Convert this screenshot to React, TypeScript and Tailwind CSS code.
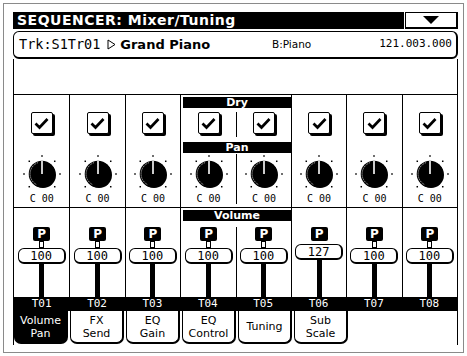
import React from "react";

const MONO = "[font-family:'DejaVu_Sans_Mono',monospace]";
const SANS = "[font-family:'DejaVu_Sans',sans-serif]";

function Check() {
  return (
    <div className="w-[22px] h-[22px] border-[1.5px] border-black rounded-[2px] bg-white shadow-[2px_2px_0_0_#000] flex items-center justify-center">
      <svg width="15" height="13" viewBox="0 0 15 13">
        <path d="M1.5 6.5 L5.5 10.5 L13.5 2" stroke="#000" strokeWidth="2.7" fill="none" />
      </svg>
    </div>
  );
}

function Knob() {
  const dots = [-135, -90, -45, 0, 45, 90, 135].map((a) => {
    const r = (a * Math.PI) / 180;
    return [20 + 18 * Math.sin(r), 20 - 18 * Math.cos(r)];
  });
  return (
    <svg width="40" height="40" viewBox="0 0 40 40">
      {dots.map(([x, y], i) => (
        <rect key={i} x={x - 0.75} y={y - 0.75} width="1.5" height="1.5" fill="#000" />
      ))}
      <circle cx="21" cy="21" r="13" fill="#000" />
      <circle cx="20" cy="20" r="13.3" fill="#000" />
      <path d="M14.2 30.4 A12 12 0 0 1 15.9 8.7" stroke="#fff" strokeWidth="0.8" strokeDasharray="1 1" fill="none" />
      <line x1="20" y1="20" x2="20" y2="7" stroke="#fff" strokeWidth="1.6" />
    </svg>
  );
}

function KnobCell() {
  return (
    <div className="flex flex-col items-center">
      <Knob />
      <div className={`h-[10px] text-[10px] leading-[10px] ${MONO}`}>C 00</div>
    </div>
  );
}

function Fader({ value, high }: { value: string; high?: boolean }) {
  return (
    <div className="flex flex-col items-center h-full">
      <div className={`w-[17px] h-[14px] bg-black rounded-[2px] text-white text-[12px] font-bold leading-[14px] text-center ${SANS}`}>P</div>
      {high ? (
        <div className="h-[3px]" />
      ) : (
        <div className="w-[5px] h-[7px] border border-black bg-white" />
      )}
      <div className={`w-[48px] h-[16px] border border-black border-r-2 border-b-2 rounded-[6px] bg-white flex items-center justify-center text-[12px] leading-[12px] ${MONO}`}>
        {value}
      </div>
      <div className="w-[5px] flex-1 bg-black" />
    </div>
  );
}

function Bar({ label }: { label: string }) {
  return (
    <div className={`h-[11px] bg-black text-white text-[11px] font-bold leading-[11px] text-center ml-[2px] ${SANS}`}>{label}</div>
  );
}

function RowACell({ first }: { first?: boolean }) {
  return (
    <div className={`flex flex-col items-center ${first ? "" : "border-l border-black"}`}>
      <div className="h-[17px]" />
      <div className="h-[25px]">
        <Check />
      </div>
      <div className="h-[17px]" />
      <KnobCell />
    </div>
  );
}

function RowBCell({ value, high, first }: { value: string; high?: boolean; first?: boolean }) {
  return (
    <div className={`flex flex-col ${first ? "" : "border-l border-black"}`}>
      <div className="h-[19px]" />
      <div className="flex-1">
        <Fader value={value} high={high} />
      </div>
    </div>
  );
}

const tabs = [
  ["Volume", "Pan"],
  ["FX", "Send"],
  ["EQ", "Gain"],
  ["EQ", "Control"],
  ["Tuning"],
  ["Sub", "Scale"],
];

export default function App() {
  return (
    <div className={`w-[467px] h-[356px] bg-white overflow-hidden pt-[3px] pl-[3px] text-black ${SANS}`}>
      <div className="w-[461px] h-[350px] border border-[#8a8a8a] pl-[9px] pr-[5px] pt-[8px] flex flex-col">
        {/* Header */}
        <div className="flex h-[17px] gap-[1px]">
          <div className="flex-1 bg-black text-white text-[14px] font-bold leading-[17px] pl-[4px] tracking-[0.5px]">
            SEQUENCER: Mixer/Tuning
          </div>
          <div className="w-[53px] border border-black border-r-2 border-b-2 bg-white flex items-center justify-center">
            <svg width="16" height="8" viewBox="0 0 16 8">
              <polygon points="0,0 16,0 8,8" fill="#000" />
            </svg>
          </div>
        </div>
        {/* Info bar */}
        <div className="mt-[2px] h-[28px] rounded-[6px] border border-black border-r-2 border-b-2 flex items-center pl-[5px] pr-[4px]">
          <div className="w-[253px] flex items-center">
            <span className={`text-[13.5px] ${MONO}`}>Trk:S1Tr01</span>
            <svg width="9" height="11" viewBox="0 0 9 11" className="ml-[7px] mr-[4px]">
              <polygon points="1,1 8,5.5 1,10" fill="none" stroke="#000" strokeWidth="1" />
            </svg>
            <span className="text-[13px] font-bold">Grand Piano</span>
          </div>
          <span className="text-[10.5px]">B:Piano</span>
          <span className={`ml-auto text-[11px] ${MONO}`}>121.003.000</span>
        </div>
        {/* Panel */}
        <div className="h-[286px] border-l border-r border-black flex flex-col">
          <div className="h-[36px] border-b border-black" />
          {/* Row A */}
          <div className="h-[113px] border-b border-black grid grid-cols-8">
            <RowACell first />
            <RowACell />
            <RowACell />
            <div className="col-span-2 border-l border-black flex flex-col">
              <div className="mt-[2px] mb-[4px]">
                <Bar label="Dry" />
              </div>
              <div className="grid grid-cols-2 h-[25px]">
                <div className="flex justify-center">
                  <Check />
                </div>
                <div className="flex justify-center border-l border-black">
                  <Check />
                </div>
              </div>
              <div className="h-[17px] pt-[5px]">
                <Bar label="Pan" />
              </div>
              <div className="grid grid-cols-2">
                <KnobCell />
                <div className="border-l border-black">
                  <KnobCell />
                </div>
              </div>
            </div>
            <RowACell />
            <RowACell />
            <RowACell />
          </div>
          {/* Row B */}
          <div className="h-[89px] grid grid-cols-8">
            <RowBCell first value="100" />
            <RowBCell value="100" />
            <RowBCell value="100" />
            <div className="col-span-2 border-l border-black flex flex-col">
              <div className="h-[19px] pt-[2px]">
                <Bar label="Volume" />
              </div>
              <div className="flex-1 grid grid-cols-2">
                <Fader value="100" />
                <div className="border-l border-black">
                  <Fader value="100" />
                </div>
              </div>
            </div>
            <RowBCell value="127" high />
            <RowBCell value="100" />
            <RowBCell value="100" />
          </div>
          {/* Labels */}
          <div className={`h-[14px] bg-black text-white grid grid-cols-8 text-[11px] leading-[14px] ${MONO}`}>
            {["T01", "T02", "T03", "T04", "T05", "T06", "T07", "T08"].map((t) => (
              <div key={t} className="text-center">{t}</div>
            ))}
          </div>
          {/* Tabs */}
          <div className="h-[34px] flex gap-[2px]">
            {tabs.map((t, i) => (
              <div
                key={i}
                className={`w-[54px] h-[33px] border-l border-r-2 border-b-2 border-black rounded-b-[7px] flex flex-col items-center justify-center text-[11px] leading-[13px] ${
                  i === 0 ? "bg-black text-white" : "bg-white text-black"
                }`}
              >
                {t.map((l) => (
                  <div key={l}>{l}</div>
                ))}
              </div>
            ))}
          </div>
        </div>
      </div>
    </div>
  );
}
